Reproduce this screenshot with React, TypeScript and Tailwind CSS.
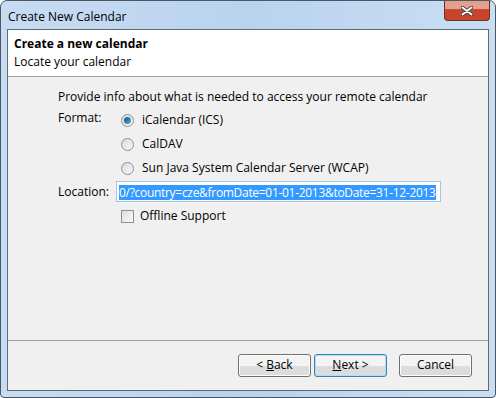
const font = { fontFamily: '"Open Sans", "Noto Sans", "Liberation Sans", sans-serif' }

function Radio({ checked, label }: { checked?: boolean; label: string }) {
  return (
    <div className="flex items-center h-[24px]">
      <span className="w-[13px] h-[13px] rounded-full border border-[#8e8f8f] bg-gradient-to-br from-[#d8d8d8] to-[#fafafa] flex items-center justify-center ml-[5px]">
        {checked && <span className="w-[7px] h-[7px] rounded-full bg-gradient-to-br from-[#0c4f7a] to-[#4fb2e8]" />}
      </span>
      <span className="ml-[8px]">{label}</span>
    </div>
  )
}

function Btn({ children, primary }: { children: React.ReactNode; primary?: boolean }) {
  return (
    <div
      className={
        'w-[73px] h-[23px] rounded-[3px] border flex items-center justify-center bg-gradient-to-b from-[#f3f3f3] from-50% to-[#dcdcdc] to-50% ' +
        (primary ? 'border-[#3c7fb1] shadow-[inset_0_0_0_1px_#a8e2f9]' : 'border-[#707070] shadow-[inset_0_0_0_1px_#fcfcfc]')
      }
    >
      {children}
    </div>
  )
}

export default function App() {
  return (
    <div className="w-[496px] h-[398px] text-[12px] text-black" style={font}>
      <div className="w-full h-full rounded-t-[7px] rounded-b-[4px] border border-[#4b5763] bg-gradient-to-r from-[#c7dcf2] via-[#b9d3ee] to-[#c9def3] flex flex-col px-[6px] pb-[6px]">
        {/* title bar */}
        <div className="h-[28px] flex items-start justify-between">
          <span className="mt-[7px] ml-[1px]">Create New Calendar</span>
          <div className="w-[46px] h-[20px] rounded-b-[4px] border border-t-0 border-[#6b2f24] bg-gradient-to-b from-[#e3a08f] from-40% to-[#c8452d] to-45% flex items-center justify-center -mr-[1px]">
            <svg width="12" height="10" viewBox="0 0 12 10">
              <path d="M1 1 L11 9 M11 1 L1 9" stroke="#3d3d3d" strokeWidth="3.6" strokeLinecap="round" />
              <path d="M1.5 1.5 L10.5 8.5 M10.5 1.5 L1.5 8.5" stroke="#fff" strokeWidth="2" strokeLinecap="round" />
            </svg>
          </div>
        </div>
        {/* client */}
        <div className="flex-1 border border-[#5d6b78] bg-[#f0f0f0] flex flex-col">
          <div className="h-[47px] bg-white border-b border-[#a0a0a0] px-[6px] pt-[5px] leading-[18px]">
            <div className="font-bold">Create a new calendar</div>
            <div>Locate your calendar</div>
          </div>
          <div className="flex-1 pl-[50px] pt-[11px]">
            <div className="leading-[18px]">Provide info about what is needed to access your remote calendar</div>
            <div className="flex mt-[2px]">
              <div className="w-[58px] pt-[1px]">Format:</div>
              <div className="flex flex-col">
                <Radio checked label="iCalendar (ICS)" />
                <Radio label="CalDAV" />
                <Radio label="Sun Java System Calendar Server (WCAP)" />
              </div>
            </div>
            <div className="flex items-center mt-[1px]">
              <div className="w-[58px]">Location:</div>
              <div className="w-[325px] h-[21px] border border-[#a5c4e3] bg-white p-[2px] overflow-hidden whitespace-nowrap">
                <span className="bg-[#3399ff] text-white inline-block h-[15px] leading-[15px] tracking-[-0.3px]">0/?country=cze&amp;fromDate=01-01-2013&amp;toDate=31-12-2013</span>
              </div>
            </div>
            <div className="flex items-center h-[24px] ml-[63px] mt-[2px]">
              <span className="w-[13px] h-[13px] border border-[#8e8f8f] bg-gradient-to-br from-[#dcdcdc] to-[#fbfbfb]" />
              <span className="ml-[6px]">Offline Support</span>
            </div>
          </div>
          <div className="h-[50px] border-t border-[#a0a0a0] flex items-center justify-end pr-[16px] pb-[1px]">
            <Btn>
              &lt; <span className="underline ml-[3px]">B</span>ack
            </Btn>
            <div className="w-[3px]" />
            <Btn primary>
              <span className="underline">N</span>ext &gt;
            </Btn>
            <div className="w-[12px]" />
            <Btn>Cancel</Btn>
          </div>
        </div>
      </div>
    </div>
  )
}
